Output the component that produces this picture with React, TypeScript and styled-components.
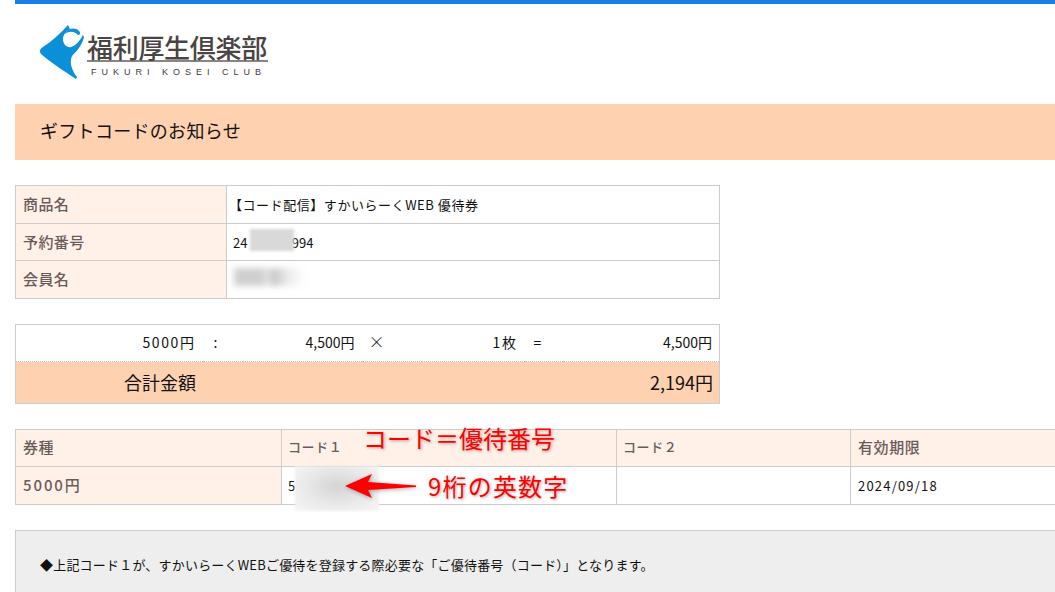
import styled, { createGlobalStyle } from "styled-components";

const FONT = `"Noto Sans CJK JP", "Liberation Sans", sans-serif`;

const GlobalStyle = createGlobalStyle`
  html, body {
    margin: 0;
    padding: 0;
    height: 592px;
    overflow: hidden;
    background: #fff;
  }
  body {
    font-family: ${FONT};
    color: #111;
  }
`;

function Logo() {
  return (
    <LogoWrap>
      <svg width="46" height="54" viewBox="0 0 46 54" aria-hidden="true">
        <path
          fill="#0a8fd8"
          d="M28 0 L30 4 C23 8 21 15 25 20 C30 25 37 21 43 10 L44 12 C42 20 37 26 32 31 C29 37 32 46 37 52 L36 54 C24 46 10 37 1 29 C-1 26 0 24 3 22 C12 16 21 8 28 0 Z"
        />
        <path fill="#0a8fd8" d="M25 9 C28 3 35 2 39 6 C41 8 40 10 38 10 C34 6 29 6 25 9 Z" />
      </svg>
      <LogoText>
        <LogoTitle>福利厚生倶楽部</LogoTitle>
        <LogoSub>FUKURI KOSEI CLUB</LogoSub>
      </LogoText>
    </LogoWrap>
  );
}

function Arrow() {
  return (
    <ArrowIcon width="72" height="26" viewBox="0 0 72 26" aria-hidden="true">
      <path fill="#ff0000" d="M0 13 L27 1 L23 9 L71 12.5 L71 14 L23 17 L27 25 Z" />
    </ArrowIcon>
  );
}

export default function App() {
  return (
    <>
      <GlobalStyle />
      <Page>
        <TopBar />
        <Logo />
        <Banner>ギフトコードのお知らせ</Banner>

        <InfoTable>
          <tbody>
            <InfoRow $height={38}>
              <LabelCell>商品名</LabelCell>
              <ValueCell>
                <ProductName>【コード配信】すかいらーくWEB 優待券</ProductName>
              </ValueCell>
            </InfoRow>
            <InfoRow $height={37}>
              <LabelCell>予約番号</LabelCell>
              <ValueCell>
                <MaskHolder>
                  24<GapText>xxxxxx</GapText>994
                  <NumberBlur />
                </MaskHolder>
              </ValueCell>
            </InfoRow>
            <InfoRow $height={38}>
              <LabelCell>会員名</LabelCell>
              <ValueCell>
                <MaskHolder>
                  <NameBlur />
                </MaskHolder>
              </ValueCell>
            </InfoRow>
          </tbody>
        </InfoTable>

        <PriceTable>
          <tbody>
            <tr>
              <PriceCell $width={187} $align="right" $spacing={1.6}>5000円</PriceCell>
              <PriceCell $width={40} $align="left" $pad={11}>:</PriceCell>
              <PriceCell $width={119} $align="right">4,500円</PriceCell>
              <PriceCell $width={60} $align="left" $pad={7}>
                <TimesMark>×</TimesMark>
              </PriceCell>
              <PriceCell $width={103} $align="right" $spacing={1.6}>1枚</PriceCell>
              <PriceCell $width={38} $align="left" $pad={9}>=</PriceCell>
              <PriceCell $align="right">4,500円</PriceCell>
            </tr>
            <tr>
              <TotalLabel colSpan={2}>合計金額</TotalLabel>
              <TotalCell colSpan={5}>2,194円</TotalCell>
            </tr>
          </tbody>
        </PriceTable>

        <CodeTableWrap>
          <CodeTable>
            <tbody>
              <tr>
                <CodeHead $width={266} $size={15} $pad={7}>券種</CodeHead>
                <CodeHead $width={335} $size={13} $pad={6}>コード１</CodeHead>
                <CodeHead $width={234} $size={13} $pad={6}>コード２</CodeHead>
                <CodeHead $width={240} $size={15} $pad={7}>有効期限</CodeHead>
              </tr>
              <tr>
                <CodeLabel>5000円</CodeLabel>
                <CodeCell $pad={6}>5</CodeCell>
                <CodeCell $pad={6} />
                <CodeCell $pad={7}>2024/09/18</CodeCell>
              </tr>
            </tbody>
          </CodeTable>
          <CodeBlur />
          <NoteTitle>コード＝優待番号</NoteTitle>
          <Arrow />
          <NoteDigits>9桁の英数字</NoteDigits>
        </CodeTableWrap>

        <Notice>◆上記コード１が、すかいらーくWEBご優待を登録する際必要な「ご優待番号（コード）」となります。</Notice>
      </Page>
    </>
  );
}

const Page = styled.div`
  width: 1055px;
  height: 592px;
  padding-left: 15px;
  box-sizing: border-box;
  overflow: hidden;
`;

const TopBar = styled.div`
  height: 4px;
  width: 1040px;
  background: #1a7ee6;
`;

const LogoWrap = styled.div`
  display: flex;
  align-items: flex-start;
  height: 100px;
  padding: 21px 0 0 25px;
  box-sizing: border-box;
`;

const LogoText = styled.div`
  display: flex;
  flex-direction: column;
  margin: 8px 0 0 1px;
  width: 181px;
`;

const LogoTitle = styled.div`
  font-size: 26px;
  line-height: 27px;
  height: 27px;
  font-weight: 500;
  color: #4a4543;
  letter-spacing: -0.3px;
  white-space: nowrap;
  border-bottom: 2px solid #8a8583;
`;

const LogoSub = styled.div`
  font-family: "Liberation Sans", sans-serif;
  font-size: 9px;
  line-height: 12px;
  margin: 4px 0 0 4px;
  letter-spacing: 5px;
  color: #3f3a38;
  white-space: nowrap;
`;

const Banner = styled.div`
  height: 56px;
  width: 1040px;
  padding: 0 0 4px 25px;
  box-sizing: border-box;
  display: flex;
  align-items: center;
  background: #fed2b0;
  font-size: 18px;
  letter-spacing: 0.3px;
  color: #111;
`;

const InfoTable = styled.table`
  width: 705px;
  margin-top: 25px;
  border-collapse: collapse;
  table-layout: fixed;
`;

const InfoRow = styled.tr<{ $height: number }>`
  height: ${(p) => p.$height}px;
`;

const LabelCell = styled.td`
  width: 211px;
  padding: 0 0 2px 7px;
  box-sizing: border-box;
  background: #fff1e8;
  border: 1px solid #ccc;
  font-size: 15px;
  font-weight: 500;
  color: #6b5a5a;
  letter-spacing: 0.4px;
`;

const ValueCell = styled.td`
  padding: 0 0 0 6px;
  box-sizing: border-box;
  border: 1px solid #ccc;
  font-size: 13px;
  color: #111;
  white-space: nowrap;
`;

const ProductName = styled.span`
  display: inline-block;
  margin-left: -4px;
  letter-spacing: 0.55px;
`;

const MaskHolder = styled.span`
  position: relative;
  display: inline-block;
  min-height: 14px;
  line-height: 14px;
`;

const GapText = styled.span`
  visibility: hidden;
  font-size: 9px;
  letter-spacing: 2.9px;
`;

const NumberBlur = styled.div`
  position: absolute;
  left: 17px;
  top: -7px;
  width: 44px;
  height: 22px;
  background: #d9d9d9;
  filter: blur(1.5px);
`;

const NameBlur = styled.div`
  position: absolute;
  left: 1px;
  top: -3px;
  width: 72px;
  height: 18px;
  background: linear-gradient(90deg, #cfcfcf 0 40%, #e8e8e8 45%, #c8c8c8 55%, #ececec 75%, #fff 100%);
  filter: blur(3px);
`;

const PriceTable = styled.table`
  width: 705px;
  margin-top: 25px;
  border-collapse: collapse;
  table-layout: fixed;
  border: 1px solid #ccc;
  font-size: 14px;
`;

const PriceCell = styled.td<{ $width?: number; $align: string; $spacing?: number; $pad?: number }>`
  ${(p) => (p.$width ? `width: ${p.$width}px;` : "")}
  height: 37px;
  padding: 0 7px 2px ${(p) => p.$pad ?? 6}px;
  box-sizing: border-box;
  text-align: ${(p) => p.$align};
  letter-spacing: ${(p) => p.$spacing ?? 0}px;
  border-bottom: 1px dotted #bbb;
  white-space: nowrap;
`;

const TimesMark = styled.span`
  font-size: 16px;
  font-weight: 300;
  line-height: 14px;
`;

const TotalLabel = styled.td`
  height: 42px;
  padding: 0 0 2px 108px;
  box-sizing: border-box;
  line-height: 20px;
  background: #fed2b0;
  font-size: 18px;
  white-space: nowrap;
`;

const TotalCell = styled.td`
  height: 42px;
  padding: 0 6px 2px 0;
  box-sizing: border-box;
  line-height: 20px;
  background: #fed2b0;
  font-size: 18px;
  text-align: right;
`;

const CodeTableWrap = styled.div`
  position: relative;
  margin-top: 25px;
  width: 1075px;
`;

const CodeTable = styled.table`
  width: 1075px;
  border-collapse: collapse;
  table-layout: fixed;
`;

const CodeHead = styled.td<{ $width: number; $size: number; $pad: number }>`
  width: ${(p) => p.$width}px;
  height: 37px;
  padding: 0 0 3px ${(p) => p.$pad}px;
  box-sizing: border-box;
  background: #fff1e8;
  border: 1px solid #ccc;
  color: #6b5a5a;
  font-size: ${(p) => p.$size}px;
  font-weight: 500;
  letter-spacing: 0.6px;
`;

const CodeLabel = styled.td`
  height: 38px;
  padding: 0 0 2px 7px;
  box-sizing: border-box;
  background: #fff1e8;
  border: 1px solid #ccc;
  color: #6b5a5a;
  font-size: 15px;
  font-weight: 500;
  letter-spacing: 1.9px;
`;

const CodeCell = styled.td<{ $pad: number }>`
  height: 38px;
  padding: 0 0 0 ${(p) => p.$pad}px;
  box-sizing: border-box;
  border: 1px solid #ccc;
  font-size: 13px;
  letter-spacing: 1.2px;
`;

const CodeBlur = styled.div`
  position: absolute;
  left: 280px;
  top: 37px;
  width: 84px;
  height: 45px;
  background: radial-gradient(ellipse at 50% 45%, #d4d4d4 0%, #eaeaea 55%, #f6f6f6 100%);
  filter: blur(1px);
`;

const NoteTitle = styled.div`
  position: absolute;
  left: 348px;
  top: -5px;
  font-size: 24px;
  line-height: 28px;
  color: #ff0000;
  white-space: nowrap;
  text-shadow: 1px 1px 3px rgba(0, 0, 0, 0.35);
`;

const ArrowIcon = styled.svg`
  position: absolute;
  left: 330px;
  top: 44px;
  filter: drop-shadow(1px 1px 2px rgba(0, 0, 0, 0.35));
`;

const NoteDigits = styled.div`
  position: absolute;
  left: 413px;
  top: 43px;
  font-size: 24px;
  line-height: 28px;
  letter-spacing: 1.2px;
  color: #ff0000;
  white-space: nowrap;
  text-shadow: 1px 1px 3px rgba(0, 0, 0, 0.35);
`;

const Notice = styled.div`
  margin-top: 25px;
  height: 80px;
  width: 1040px;
  padding: 24px 0 0 24px;
  box-sizing: border-box;
  background: #eee;
  border-top: 1px solid #ccc;
  border-left: 1px solid #ccc;
  font-size: 13px;
  letter-spacing: 0.2px;
  color: #111;
  white-space: nowrap;
`;
